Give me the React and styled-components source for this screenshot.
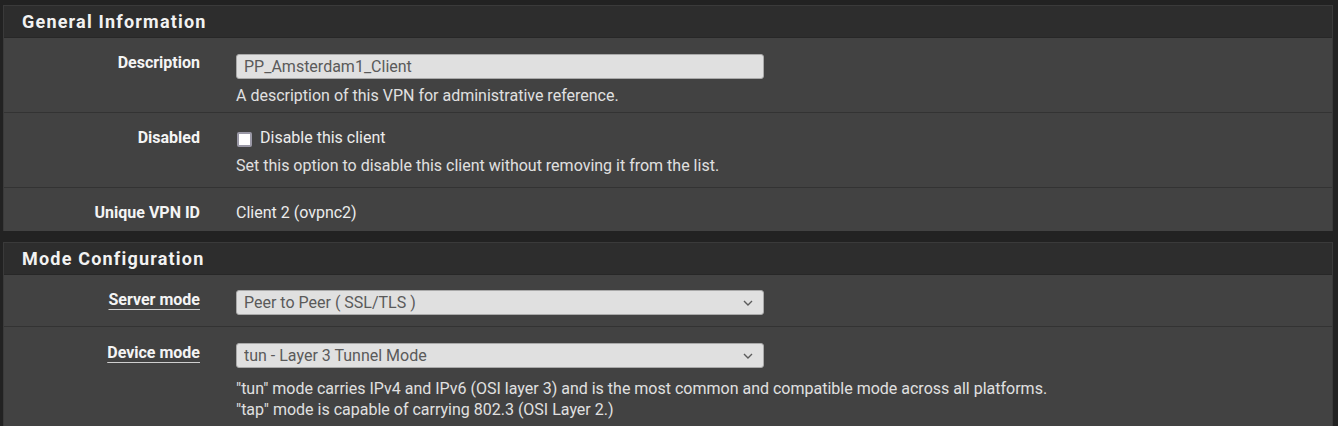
import React from 'react';
import styled, { createGlobalStyle } from 'styled-components';

const GlobalStyle = createGlobalStyle`
  html, body {
    margin: 0;
    padding: 0;
    background: #222222;
    font-family: Roboto, "Liberation Sans", Arial, sans-serif;
    font-size: 16px;
    color: #e6e6e6;
  }
`;

const Page = styled.div`
  display: flex;
  flex-direction: column;
  gap: 11px;
  padding: 5px 5px 0 3px;
`;

const Panel = styled.section`
  background: #424242;
  border: 1px solid #3a3a3a;
  border-bottom: none;
`;

const PanelHeading = styled.h2`
  margin: 0;
  height: 31px;
  line-height: 31px;
  padding-left: 18px;
  background: #2d2d2d;
  border-bottom: 1px solid #272727;
  color: #f2f2f2;
  font-size: 18px;
  font-weight: 700;
  letter-spacing: 1.2px;
`;

const Row = styled.div`
  display: grid;
  grid-template-columns: 196px 1fr;
  column-gap: 36px;
  padding: ${(p) => p.$pt}px 0 ${(p) => p.$pb}px;
  & + & {
    border-top: 1px solid #333333;
  }
`;

const Label = styled.div`
  text-align: right;
  font-weight: 700;
  line-height: 20px;
  color: #f4f4f4;

  span {
    text-decoration: ${(p) => (p.$link ? 'underline' : 'none')};
    text-underline-offset: 4px;
    text-decoration-thickness: 1px;
    text-decoration-color: #cfcfcf;
  }
`;

const Field = styled.div`
  display: flex;
  flex-direction: column;
  min-width: 0;
`;

const TextInput = styled.input`
  box-sizing: border-box;
  width: 528px;
  height: 25px;
  margin: 1px 0 0;
  padding: 0 7px;
  border: 1px solid #a9a9a9;
  border-radius: 3px;
  background: #e0e0e0;
  color: #5a5a5a;
  font: 16px Roboto, "Liberation Sans", sans-serif;
  outline: none;
`;

const SelectWrap = styled.div`
  position: relative;
  width: 528px;
  height: 25px;

  svg {
    position: absolute;
    right: 11px;
    top: 10px;
    pointer-events: none;
  }
`;

const Select = styled.select`
  box-sizing: border-box;
  appearance: none;
  width: 100%;
  height: 25px;
  margin: 0;
  padding: 0 7px;
  border: 1px solid #a9a9a9;
  border-radius: 3px;
  background: #e0e0e0;
  color: #5a5a5a;
  font: 16px Roboto, "Liberation Sans", sans-serif;
  outline: none;
`;

const Help = styled.div`
  margin-top: ${(p) => p.$mt}px;
  line-height: ${(p) => p.$lh || 20}px;
  color: #e0e0e0;
  white-space: nowrap;
`;

const CheckLine = styled.label`
  display: flex;
  align-items: center;
  gap: 8px;
  line-height: 20px;
  color: #ececec;
`;

const Check = styled.input`
  appearance: none;
  box-sizing: border-box;
  width: 15px;
  height: 15px;
  margin: 2px 0 0 1px;
  border: 2px solid #9a98a6;
  border-radius: 2px;
  background: #ffffff;
`;

const Value = styled.div`
  line-height: 20px;
  color: #ececec;
`;

function Chevron() {
  return (
    <svg width="10" height="6" viewBox="0 0 10 6">
      <path d="M1 1l4 4 4-4" fill="none" stroke="#5c5c5c" strokeWidth="1.4" />
    </svg>
  );
}

export default function App() {
  return (
    <>
      <GlobalStyle />
      <Page>
        <Panel>
          <PanelHeading>General Information</PanelHeading>
          <Row $pt={15} $pb={6}>
            <Label>
              <span>Description</span>
            </Label>
            <Field>
              <TextInput defaultValue="PP_Amsterdam1_Client" />
              <Help $mt={7}>A description of this VPN for administrative reference.</Help>
            </Field>
          </Row>
          <Row $pt={15} $pb={11}>
            <Label>
              <span>Disabled</span>
            </Label>
            <Field>
              <CheckLine>
                <Check type="checkbox" />
                Disable this client
              </CheckLine>
              <Help $mt={8}>Set this option to disable this client without removing it from the list.</Help>
            </Field>
          </Row>
          <Row $pt={15} $pb={8}>
            <Label>
              <span>Unique VPN ID</span>
            </Label>
            <Value>Client 2 (ovpnc2)</Value>
          </Row>
        </Panel>
        <Panel>
          <PanelHeading>Mode Configuration</PanelHeading>
          <Row $pt={15} $pb={11}>
            <Label $link>
              <span>Server mode</span>
            </Label>
            <SelectWrap>
              <Select defaultValue="p2p">
                <option value="p2p">Peer to Peer ( SSL/TLS )</option>
              </Select>
              <Chevron />
            </SelectWrap>
          </Row>
          <Row $pt={16} $pb={10}>
            <Label $link>
              <span>Device mode</span>
            </Label>
            <Field>
              <SelectWrap>
                <Select defaultValue="tun">
                  <option value="tun">tun - Layer 3 Tunnel Mode</option>
                </Select>
                <Chevron />
              </SelectWrap>
              <Help $mt={10} $lh={21}>
                "tun" mode carries IPv4 and IPv6 (OSI layer 3) and is the most common and compatible mode across all platforms.
                <br />
                "tap" mode is capable of carrying 802.3 (OSI Layer 2.)
              </Help>
            </Field>
          </Row>
        </Panel>
      </Page>
    </>
  );
}
